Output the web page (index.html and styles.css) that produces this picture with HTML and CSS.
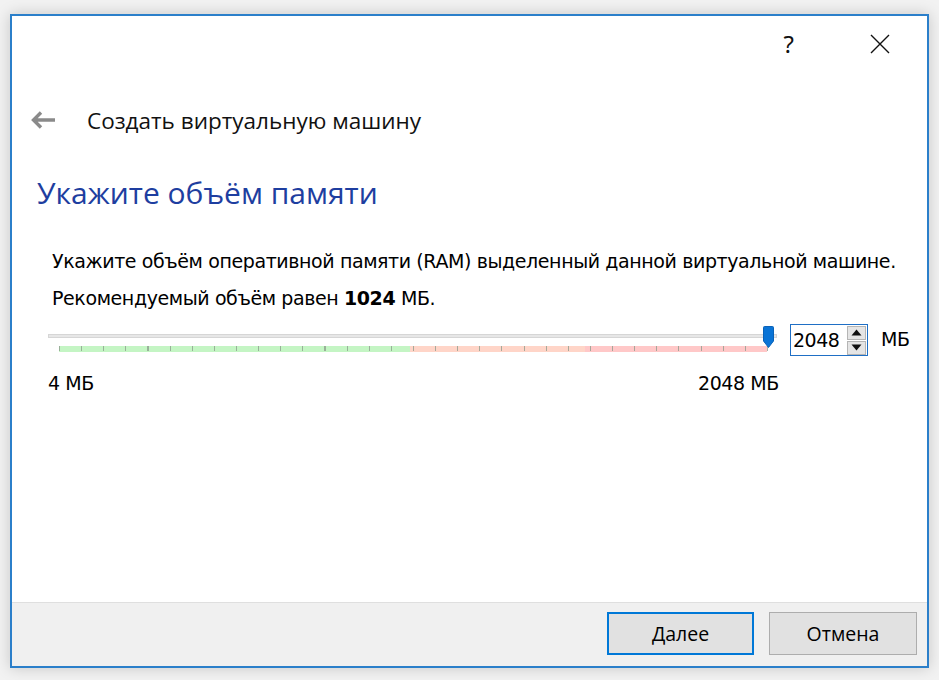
FILE: index.html
```html
<!DOCTYPE html>
<html lang="ru">
<head>
<meta charset="utf-8">
<link rel="stylesheet" href="styles.css">
</head>
<body>
<div class="window">
  <div class="main">
    <div class="titlebar">
      <span class="help">?</span>
      <svg class="close" width="20" height="20" viewBox="0 0 20 20"><path d="M1 1 L19 19 M19 1 L1 19" stroke="#111" stroke-width="1.4" fill="none"/></svg>
    </div>
    <div class="header">
      <svg class="back" width="26" height="18" viewBox="0 0 26 18"><path d="M2 9 H24 M10 1.5 L2.5 9 L10 16.5" stroke="#8a8a8a" stroke-width="3.4" fill="none" stroke-linejoin="miter"/></svg>
      <span class="header-title">Создать виртуальную машину</span>
    </div>
    <h1 class="page-title">Укажите объём памяти</h1>
    <div class="content">
      <p class="line">Укажите объём оперативной памяти (RAM) выделенный данной виртуальной машине.</p>
      <p class="line">Рекомендуемый объём равен <b>1024</b> МБ.</p>
      <div class="slider-row">
        <div class="slider">
          <div class="groove"></div>
          <div class="scale">
            <div class="zone green"></div>
            <div class="zone orange"></div>
            <div class="zone red"></div>
            <div class="ticks"></div>
          </div>
          <svg class="handle" width="11" height="22" viewBox="0 0 11 22"><path d="M0.5 1.5 Q0.5 0.5 1.5 0.5 H9.5 Q10.5 0.5 10.5 1.5 V15 L5.5 21.5 L0.5 15 Z" fill="#0a74d6" stroke="#0a62b8" stroke-width="1"/></svg>
          <div class="labels"><span>4 МБ</span><span>2048 МБ</span></div>
        </div>
        <div class="spin">
          <span class="spin-val">2048</span>
          <div class="spin-btns">
            <div class="sbtn"><svg width="11" height="7" viewBox="0 0 11 7"><path d="M0.5 6.5 L5.5 0.5 L10.5 6.5 Z" fill="#111"/></svg></div>
            <div class="sbtn"><svg width="11" height="7" viewBox="0 0 11 7"><path d="M0.5 0.5 L5.5 6.5 L10.5 0.5 Z" fill="#111"/></svg></div>
          </div>
        </div>
        <span class="unit">МБ</span>
      </div>
    </div>
  </div>
  <div class="footer">
    <button class="btn primary">Далее</button>
    <button class="btn">Отмена</button>
  </div>
</div>
</body>
</html>
```
FILE: styles.css
```css
html, body {
  margin: 0;
  padding: 0;
  background: #f2f2f2;
  width: 939px;
  height: 680px;
  overflow: hidden;
}
body {
  padding: 14px 10px 0 10px;
  box-sizing: border-box;
}
.window {
  width: 919px;
  height: 654px;
  box-sizing: border-box;
  border: 2px solid #2b7fca;
  background: #fff;
  display: flex;
  flex-direction: column;
  box-shadow: 0 0 14px rgba(0,0,0,0.18);
}
.main {
  flex: 1;
  display: flex;
  flex-direction: column;
  border-bottom: 1px solid #dfdfdf;
}
.titlebar {
  height: 56px;
  display: flex;
  align-items: center;
  justify-content: flex-end;
  padding-right: 37px;
  gap: 58px;
}
.help {
  font-family: "Noto Sans", sans-serif;
  font-size: 24px;
  color: #111;
  margin-top: -2px;
  margin-right: 18px;
}
.close { margin-top: -1px; }
.header {
  height: 100px;
  display: flex;
  align-items: center;
  padding-left: 19px;
  margin-top: -2px;
}
.back { margin-right: 31px; margin-top: -1px; }
.header-title {
  font-family: "Open Sans", "Noto Sans", sans-serif;
  font-size: 22.5px;
  color: #111;
  margin-left: -1px;
}
.page-title {
  margin: 0;
  padding-left: 25px;
  font-family: "Open Sans", "Noto Sans", sans-serif;
  font-weight: 400;
  font-size: 30px;
  color: #1e3ea0;
  height: 46px;
  line-height: 46px;
}
.content {
  padding-left: 40px;
  padding-top: 27px;
  font-family: "DejaVu Sans", sans-serif;
  font-size: 19px;
  color: #000;
}
.line {
  margin: 0;
  height: 37px;
  line-height: 37px;
  white-space: nowrap;
  letter-spacing: -0.4px;
}
.line b { font-weight: bold; }
.slider-row {
  display: flex;
  align-items: flex-start;
  margin-top: 10px;
  margin-left: -4px;
}
.slider {
  position: relative;
  width: 729px;
  height: 70px;
}
.groove {
  position: absolute;
  left: 0;
  top: 7px;
  width: 729px;
  height: 4px;
  box-sizing: border-box;
  background: #e7e7e7;
  border: 1px solid #d6d6d6;
}
.scale {
  position: absolute;
  left: 11px;
  top: 19px;
  width: 708px;
  height: 6px;
  display: flex;
}
.zone { height: 6px; }
.green { width: 351px; background: #c4f5c4; }
.orange { width: 175px; background: #ffd5c8; }
.red { width: 182px; background: #ffc8c8; }
.ticks {
  position: absolute;
  left: 0;
  top: 0;
  width: 709px;
  height: 5px;
  background: repeating-linear-gradient(to right, #8a9a8a 0, #8a9a8a 1px, transparent 1px, transparent 22.125px);
  opacity: 0.75;
}
.handle {
  position: absolute;
  left: 715px;
  top: -1px;
}
.labels {
  position: absolute;
  left: 0;
  top: 45px;
  width: 731px;
  display: flex;
  justify-content: space-between;
  font-size: 19px;
  letter-spacing: -0.4px;
}
.spin {
  margin-left: 13px;
  margin-top: -3px;
  width: 78px;
  height: 32px;
  box-sizing: border-box;
  border: 1px solid #1f6fc5;
  display: flex;
  align-items: center;
  padding-left: 2px;
}
.spin-val {
  flex: 1;
  font-size: 19px;
  letter-spacing: -0.5px;
}
.spin-btns {
  display: flex;
  flex-direction: column;
  margin-right: 1px;
  gap: 1px;
}
.sbtn {
  width: 17px;
  height: 12px;
  background: #e5e5e5;
  border: 1px solid #b5b5b5;
  display: flex;
  align-items: center;
  justify-content: center;
}
.unit {
  margin-left: 13px;
  margin-top: 1px;
  font-size: 19px;
  letter-spacing: -0.3px;
}
.footer {
  height: 63px;
  background: #f0f0f0;
  display: flex;
  justify-content: flex-end;
  align-items: flex-start;
  padding: 9px 10px 0 0;
  box-sizing: border-box;
  gap: 15px;
}
.btn {
  width: 148px;
  height: 43px;
  box-sizing: border-box;
  background: #e1e1e1;
  border: 1px solid #adadad;
  font-family: "Open Sans", "Noto Sans", sans-serif;
  font-size: 19.5px;
  color: #000;
  padding: 0;
}
.btn.primary {
  width: 147px;
  border: 2px solid #0078d7;
}
```
